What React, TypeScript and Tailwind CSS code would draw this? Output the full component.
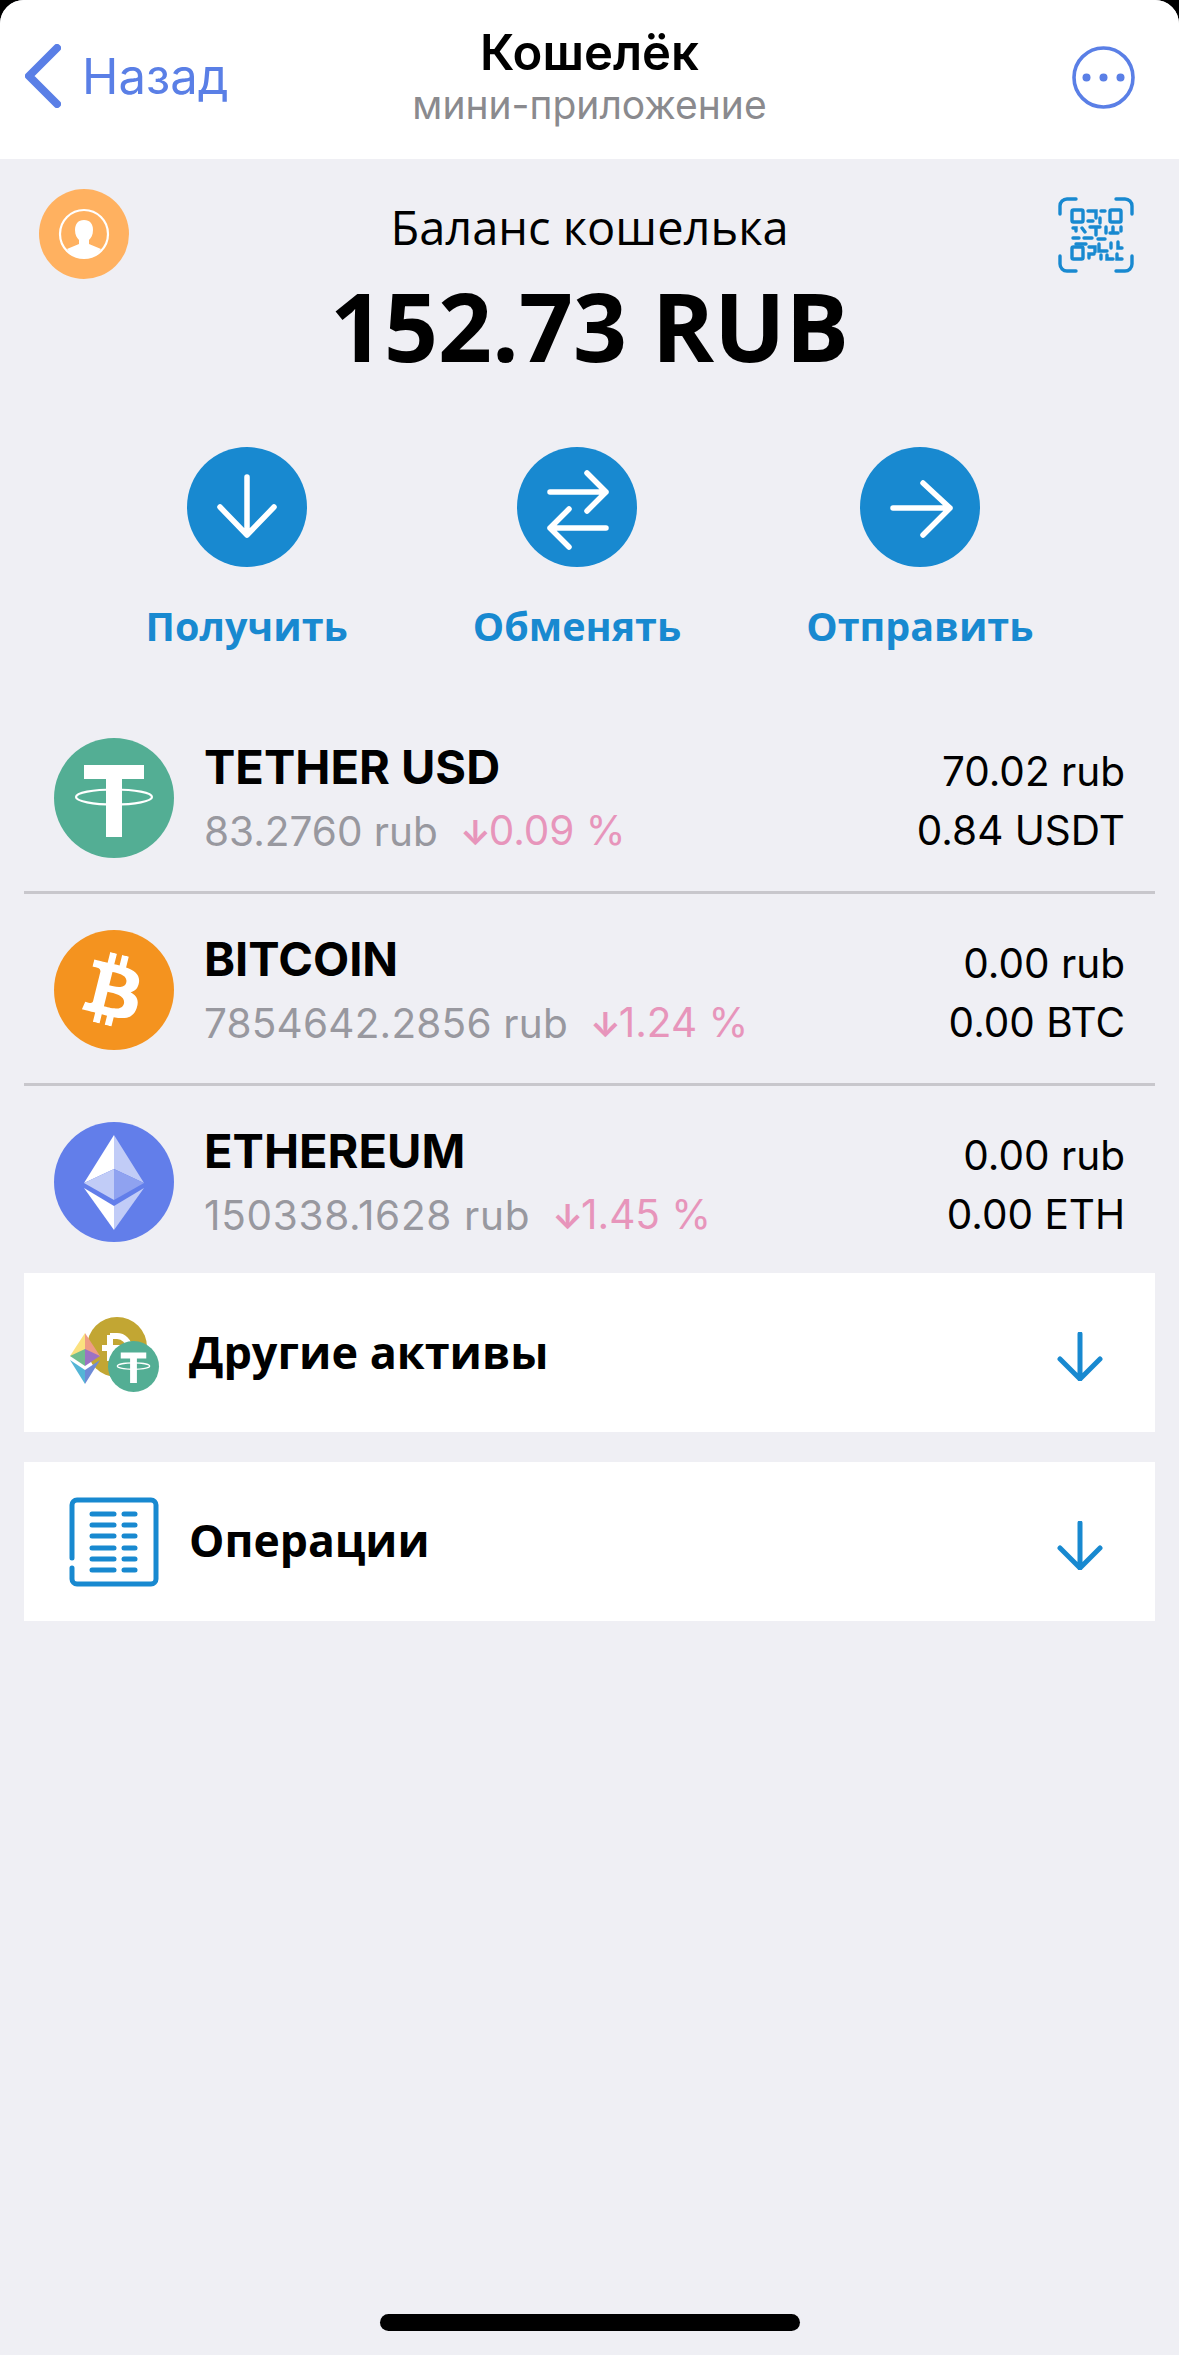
import { FaBtc } from 'react-icons/fa';

const inter = "font-['Inter',sans-serif]";
const openSans = "font-['Open_Sans',sans-serif]";

function TetherCoin({ className }: { className: string }) {
  return (
    <svg viewBox="0 0 120 120" className={className}>
      <circle cx="60" cy="60" r="60" fill="#53ae94" />
      <path d="M30 27h60v14H68v58H52V41H30z" fill="#fff" />
      <ellipse cx="60" cy="59" rx="38" ry="7.5" fill="none" stroke="#fff" strokeWidth="2.2" />
    </svg>
  );
}

function BitcoinCoin() {
  return (
    <div className="flex h-[120px] w-[120px] shrink-0 items-center justify-center rounded-full bg-[#f4931f]">
      <FaBtc className="h-[72px] w-[54px] rotate-[14deg] text-white" />
    </div>
  );
}

function EthereumCoin() {
  return (
    <svg viewBox="0 0 120 120" className="h-[120px] w-[120px] shrink-0">
      <circle cx="60" cy="60" r="60" fill="#627eea" />
      <path d="M60 13L30 61l30-14z" fill="#fff" />
      <path d="M60 13l30 48-30-14z" fill="#c1ccf7" />
      <path d="M60 47L30 61l30 17z" fill="#c1ccf7" />
      <path d="M60 47l30 14-30 17z" fill="#8fa2f0" />
      <path d="M30 66l30 42V84z" fill="#fff" />
      <path d="M90 66l-30 42V84z" fill="#c1ccf7" />
    </svg>
  );
}

function AssetsIcon() {
  return (
    <svg viewBox="0 0 105 85" className="mt-[6px] h-[85px] w-[105px] shrink-0">
      <circle cx="57" cy="34" r="30" fill="#c2a633" />
      <path d="M50 22v26M50 23h7a11 11 0 0 1 0 24h-7M42 35h18" fill="none" stroke="#fff" strokeWidth="6" />
      <path d="M25 20L10 43l15 6z" fill="#fbe17f" />
      <path d="M25 20l15 23-15 6z" fill="#ee9c85" />
      <path d="M25 36L10 43l15 10z" fill="#6fbd8f" />
      <path d="M25 36l15 7-15 10z" fill="#9b72c4" />
      <path d="M10 47l15 24V57z" fill="#54b5d6" />
      <path d="M40 47L25 71V57z" fill="#6e8bd6" />
      <g transform="translate(48 28) scale(0.425)">
        <circle cx="60" cy="60" r="60" fill="#53ae94" />
        <path d="M30 27h60v14H68v58H52V41H30z" fill="#fff" />
        <ellipse cx="60" cy="59" rx="38" ry="7.5" fill="none" stroke="#fff" strokeWidth="3" />
      </g>
    </svg>
  );
}

function OperationsIcon() {
  const rows = [17, 28, 39, 51, 62, 73];
  return (
    <svg viewBox="0 0 90 90" className="h-[90px] w-[90px] shrink-0">
      <path
        d="M3 61V8a5 5 0 0 1 5-5h74a5 5 0 0 1 5 5v74a5 5 0 0 1-5 5H8a5 5 0 0 1-5-5V71"
        fill="none"
        stroke="#1889d0"
        strokeWidth="5"
        strokeLinecap="round"
      />
      {rows.map((y) => (
        <g key={y} stroke="#1889d0" strokeWidth="5" strokeLinecap="round">
          <path d={`M23 ${y}h22`} />
          <path d={`M55 ${y}h11`} />
        </g>
      ))}
    </svg>
  );
}

function DownArrow() {
  return (
    <svg viewBox="0 0 46 49" className="mt-[8px] h-[49px] w-[46px]" fill="none" stroke="#1889d0" strokeWidth="5" strokeLinecap="round" strokeLinejoin="round">
      <path d="M23 2v45M3 27l20 20 20-20" />
    </svg>
  );
}

function QrIcon() {
  return (
    <svg viewBox="0 0 76 76" className="h-[76px] w-[76px]" fill="none" stroke="#1889d0" strokeWidth="3.4" strokeLinecap="round">
      <path d="M2 17V9a7 7 0 0 1 7-7h9M58 2h9a7 7 0 0 1 7 7v8M2 59v8a7 7 0 0 0 7 7h9M58 74h9a7 7 0 0 0 7-7v-8" />
      <rect x="14" y="13" width="11" height="12" rx="1.5" />
      <rect x="52" y="13" width="11" height="12" rx="1.5" />
      <rect x="14" y="50" width="11" height="12" rx="1.5" />
      <path d="M30 14h8v7M43 14h4M30 24h5M42 21v5M15 31h3v3M24 31l3 4M32 30h10M38 30v8M48 30v6M55 30v5M63 30v4M60 36h-8M15 41h6M26 41h8M40 42h7M18 47h10M31 50h6v5M41 47v7h8M53 46v5M60 45v6h4M31 61v-4h5M43 58v4M49 58v4h6M59 57v5h5" />
    </svg>
  );
}

function AvatarIcon() {
  return (
    <svg viewBox="0 0 90 90" className="h-[90px] w-[90px] shrink-0">
      <circle cx="45" cy="45" r="45" fill="#ffb160" />
      <circle cx="45" cy="45" r="24" fill="none" stroke="#fff" strokeWidth="2.2" />
      <path
        d="M45 31c6 0 9 4 9 10 0 5-2 8-4 10v4l12 5c-4 6-10 9-17 9s-13-3-17-9l12-5v-4c-2-2-4-5-4-10 0-6 3-10 9-10z"
        fill="#fff"
      />
    </svg>
  );
}

const actions = [
  {
    label: 'Получить',
    icon: <path d="M60 30v58M33 60l27 28 27-28" />,
  },
  {
    label: 'Обменять',
    icon: <path d="M33 45h56M70 26l19 19-19 19M89 81H33M52 62L33 81l19 19" />,
  },
  {
    label: 'Отправить',
    icon: <path d="M33 61h57M63 36l27 25-27 27" />,
  },
];

const coins = [
  { name: 'TETHER USD', price: '83.2760 rub', priceClass: '', change: '0.09 %', rub: '70.02 rub', amount: '0.84 USDT', icon: <TetherCoin className="h-[120px] w-[120px] shrink-0" /> },
  { name: 'BITCOIN', price: '7854642.2856 rub', priceClass: 'tracking-[0.2px]', change: '1.24 %', rub: '0.00 rub', amount: '0.00 BTC', icon: <BitcoinCoin /> },
  { name: 'ETHEREUM', price: '150338.1628 rub', priceClass: 'tracking-[0.7px]', change: '1.45 %', rub: '0.00 rub', amount: '0.00 ETH', icon: <EthereumCoin /> },
];

export default function App() {
  return (
    <div className="h-[2355px] w-[1179px] overflow-hidden bg-black">
      <div className="relative h-full overflow-hidden rounded-t-[24px] bg-[#efeff4]">
        {/* telegram header */}
        <header className="relative flex h-[159px] items-start justify-between bg-white">
          <div className="flex items-center pl-[25px] pt-[44px]">
            <svg viewBox="0 0 36 64" className="h-[64px] w-[36px]" fill="none" stroke="#5a7fe6" strokeWidth="8" strokeLinecap="round" strokeLinejoin="round">
              <path d="M32 4L4 32l28 28" />
            </svg>
            <span className={`${inter} ml-[21px] text-[49px] leading-none text-[#5a7fe6]`}>Назад</span>
          </div>
          <div className="absolute left-0 right-0 top-[24px] flex flex-col items-center">
            <div className={`${inter} text-[49px] font-semibold leading-[58px] text-black`}>Кошелёк</div>
            <div className={`${inter} text-[39px] leading-[46px] text-[#8a8a8e]`}>мини-приложение</div>
          </div>
          <svg viewBox="0 0 63 63" className="mr-[44px] mt-[46px] h-[63px] w-[63px]">
            <circle cx="31.5" cy="31.5" r="29.5" fill="none" stroke="#5a7fe6" strokeWidth="3.6" />
            <circle cx="14.5" cy="31.5" r="4" fill="#5a7fe6" />
            <circle cx="31.5" cy="31.5" r="4" fill="#5a7fe6" />
            <circle cx="48.5" cy="31.5" r="4" fill="#5a7fe6" />
          </svg>
        </header>

        {/* balance */}
        <section className="flex items-start justify-between pl-[39px] pr-[45px] pt-[30px]">
          <AvatarIcon />
          <div className={`${openSans} pt-[8px] text-[47px] leading-[60px] text-black`}>Баланс кошелька</div>
          <div className="pl-[8px] pt-[8px]">
            <QrIcon />
          </div>
        </section>
        <div className={`${openSans} mt-[-12px] text-center text-[94.5px] font-bold leading-[118px] text-black`}>152.73 RUB</div>

        <div className="mt-[62px] flex justify-center gap-[125px]">
          {actions.map((a) => (
            <div key={a.label} className="flex flex-col items-center">
              <div className="h-[120px] w-[120px] rounded-full bg-[#1889d0]">
                <svg viewBox="0 0 120 120" className="h-[120px] w-[120px]" fill="none" stroke="#fff" strokeWidth="5.5" strokeLinecap="round" strokeLinejoin="round">
                  {a.icon}
                </svg>
              </div>
              <div className={`${openSans} mt-[33px] text-[39.5px] font-bold leading-[52px] text-[#1889d0]`}>{a.label}</div>
            </div>
          ))}
        </div>

        {/* coins */}
        <div className="mx-[24px] mt-[50px]">
          {coins.map((c, i) => (
            <div
              key={c.name}
              className={`flex items-start pb-[33px] pl-[30px] pr-[30px] pt-[36px] ${i < coins.length - 1 ? 'border-b-[3px] border-[#c8c7cc]' : ''}`}
            >
              {c.icon}
              <div className={`${inter} ml-[30px] h-[120px] flex-1`}>
                <div className="text-[47px] font-bold leading-[58px] text-black">{c.name}</div>
                <div className="mt-[8px] flex items-center text-[40.5px] leading-[54px] text-[#98989f]">
                  <span className={c.priceClass}>{c.price}</span>
                  <span className="ml-[22px] text-[#e795bb]">
                    <span className="mr-[-2px] text-[34px] font-bold">↓</span>
                    {c.change}
                  </span>
                </div>
              </div>
              <div className={`${inter} h-[120px] pt-[4px] text-right text-[40.5px] text-black`}>
                <div className="leading-[60px]">{c.rub}</div>
                <div className="mt-[2px] leading-[54px]">{c.amount}</div>
              </div>
            </div>
          ))}
        </div>

        {/* expandable cards */}
        <div className="mx-[24px] mt-[-2px] flex flex-col gap-[30px]">
          <div className="flex h-[159px] items-center justify-between bg-white pr-[52px]">
            <div className="flex items-center pl-[36px]">
              <AssetsIcon />
              <span className={`${openSans} ml-[24px] pb-[2px] text-[45px] font-bold text-black`}>Другие активы</span>
            </div>
            <DownArrow />
          </div>
          <div className="flex h-[159px] items-center justify-between bg-white pr-[52px]">
            <div className="flex items-center pl-[45px]">
              <OperationsIcon />
              <span className={`${openSans} ml-[30px] pb-[2px] text-[44.5px] font-bold text-black`}>Операции</span>
            </div>
            <DownArrow />
          </div>
        </div>

        <div className="absolute bottom-[24px] left-[380px] h-[17px] w-[420px] rounded-full bg-black" />
      </div>
    </div>
  );
}
